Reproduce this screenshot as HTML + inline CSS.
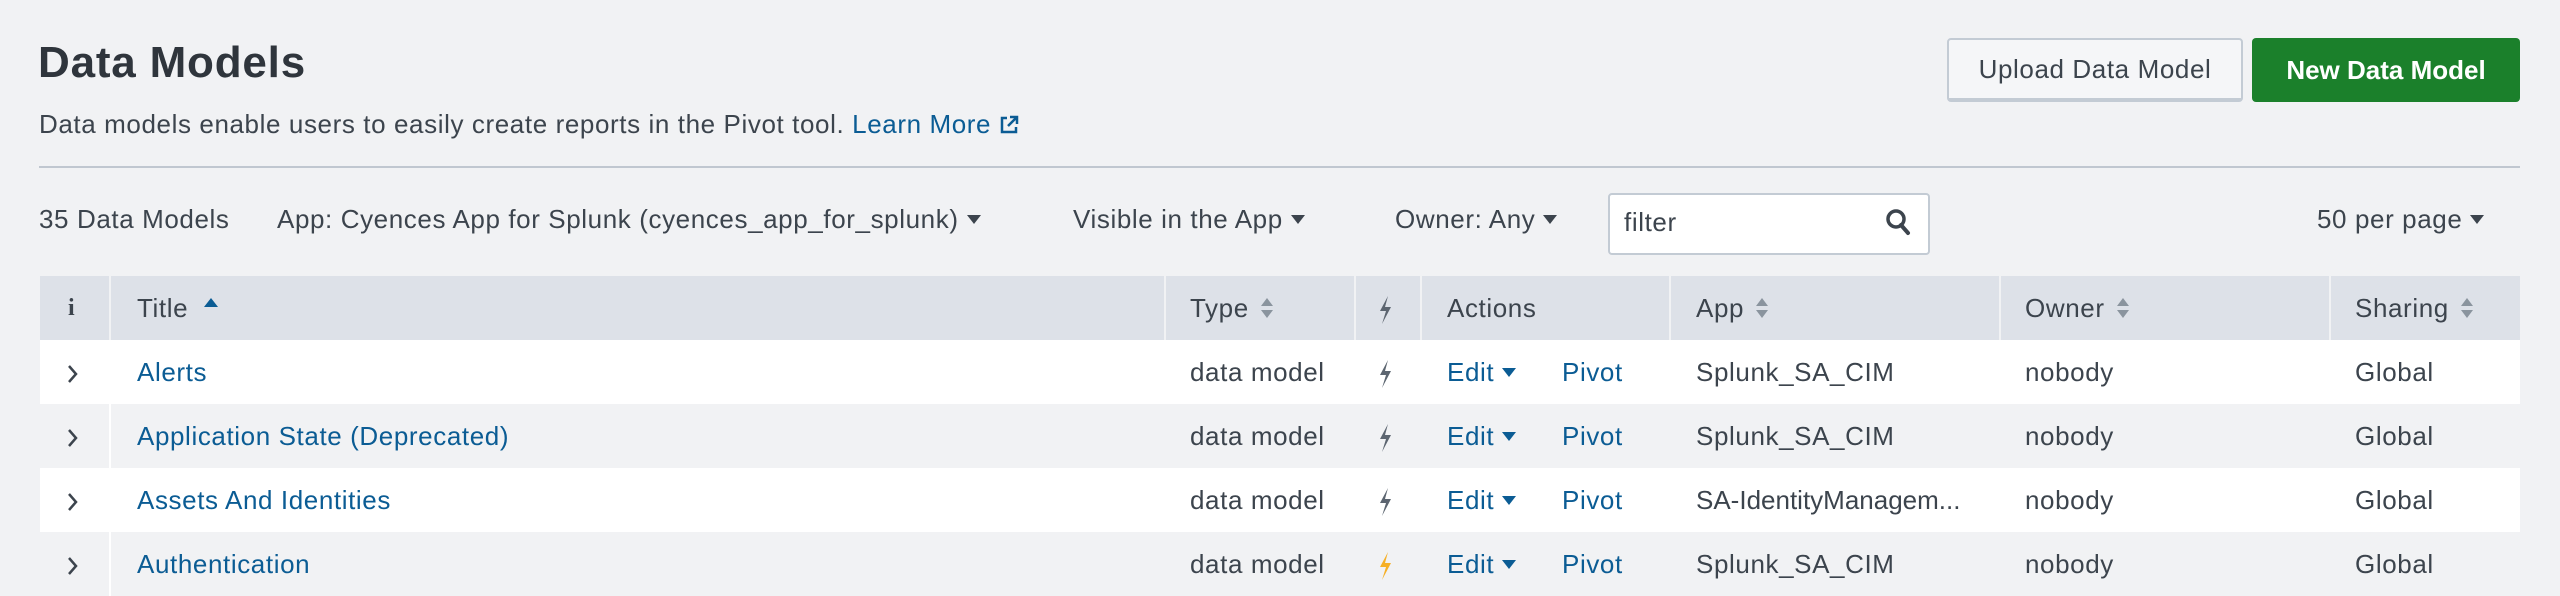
<!DOCTYPE html>
<html><head><meta charset="utf-8"><style>
*{margin:0;padding:0;box-sizing:border-box}
body{width:2560px;height:596px;background:#f1f2f4;font-family:"Liberation Sans",sans-serif;color:#3c444d;position:relative;overflow:hidden;letter-spacing:0.6px}
.a{position:absolute;white-space:nowrap}
.lnk{color:#0b5c94}
.btn{position:absolute;border-radius:4px;font-size:26px;display:flex;align-items:center;justify-content:center}
.tri{display:inline-block;width:0;height:0;border-left:7px solid transparent;border-right:7px solid transparent;border-top:9px solid currentColor;vertical-align:middle;margin-left:8px;position:relative;top:-2px}
.row{position:absolute;left:40px;width:2480px;height:64px}
.cell{position:absolute;top:0;height:64px;line-height:64px;font-size:26px;white-space:nowrap}
.sep{position:absolute;top:0;width:2px;height:64px;background:#f1f2f4}
.sort{display:inline-block;vertical-align:middle;margin-left:12px;position:relative;top:-2px}
</style></head><body>
<div class="a" style="left:38px;top:38px;font-size:44px;font-weight:bold;color:#2f353c;letter-spacing:0.8px">Data Models</div>
<div class="a" style="left:39px;top:109px;font-size:26px">Data models enable users to easily create reports in the Pivot tool. <span class="lnk">Learn More <svg width="20" height="20" viewBox="0 0 20 20" style="vertical-align:-2px"><path d="M8 3H3v14h14v-5" fill="none" stroke="#0b5c94" stroke-width="2.5"/><path d="M11 2h7v7M18 2l-9 9" fill="none" stroke="#0b5c94" stroke-width="2.5"/></svg></span></div>
<div class="btn" style="left:1947px;top:38px;width:296px;height:64px;background:#f5f6f8;border:2px solid #c3cbd4;border-bottom-width:4px;color:#3c444d">Upload Data Model</div>
<div class="btn" style="left:2252px;top:38px;width:268px;height:64px;background:#1b802b;color:#fff;font-weight:bold;letter-spacing:0">New Data Model</div>
<div class="a" style="left:39px;top:166px;width:2481px;height:2px;background:#c0c7d0"></div>
<div class="a" style="left:39px;top:204px;font-size:26px">35 Data Models</div>
<div class="a" style="left:277px;top:204px;font-size:26px">App: Cyences App for Splunk (cyences_app_for_splunk)<span class="tri"></span></div>
<div class="a" style="left:1073px;top:204px;font-size:26px">Visible in the App<span class="tri"></span></div>
<div class="a" style="left:1395px;top:204px;font-size:26px">Owner: Any<span class="tri"></span></div>
<div class="a" style="left:1608px;top:193px;width:322px;height:62px;background:#fff;border:2px solid #c3cbd4;border-radius:4px"></div>
<div class="a" style="left:1624px;top:207px;font-size:26px;color:#3c444d">filter</div>
<svg class="a" style="left:1885px;top:208px" width="26" height="28" viewBox="0 0 26 28"><circle cx="11" cy="11" r="8" fill="none" stroke="#3c444d" stroke-width="3.5"/><path d="M16 17l7 8" stroke="#3c444d" stroke-width="4" stroke-linecap="round"/></svg>
<div class="a" style="left:2317px;top:204px;font-size:26px">50 per page<span class="tri"></span></div>

<div class="row" style="top:276px;background:#dde1e8">
 <div class="cell" style="left:28px;font-family:'Liberation Serif',serif;font-weight:bold;font-size:24px">i</div>
 <div class="sep" style="left:69px"></div>
 <div class="cell" style="left:97px">Title <span style="display:inline-block;width:0;height:0;border-left:7px solid transparent;border-right:7px solid transparent;border-bottom:9px solid #0b5c94;vertical-align:middle;margin-left:8px;position:relative;top:-8px"></span></div>
 <div class="sep" style="left:1124px"></div>
 <div class="cell" style="left:1150px">Type<svg class="sort" width="12" height="20" viewBox="0 0 12 20"><path d="M6 0l6 8H0zM6 20l6-8H0z" fill="#8a949e"/></svg></div>
 <div class="sep" style="left:1314px"></div>
 <div class="cell" style="left:1337px"><svg width="16" height="28" viewBox="0 0 16 28" style="vertical-align:middle"><path d="M11 0L3 15h6L5 28l9-17H8z" fill="#5c6570"/></svg></div>
 <div class="sep" style="left:1380px"></div>
 <div class="cell" style="left:1407px">Actions</div>
 <div class="sep" style="left:1629px"></div>
 <div class="cell" style="left:1656px">App<svg class="sort" width="12" height="20" viewBox="0 0 12 20"><path d="M6 0l6 8H0zM6 20l6-8H0z" fill="#8a949e"/></svg></div>
 <div class="sep" style="left:1959px"></div>
 <div class="cell" style="left:1985px">Owner<svg class="sort" width="12" height="20" viewBox="0 0 12 20"><path d="M6 0l6 8H0zM6 20l6-8H0z" fill="#8a949e"/></svg></div>
 <div class="sep" style="left:2289px"></div>
 <div class="cell" style="left:2315px">Sharing<svg class="sort" width="12" height="20" viewBox="0 0 12 20"><path d="M6 0l6 8H0zM6 20l6-8H0z" fill="#8a949e"/></svg></div>
</div>

<div class="row" style="top:340px;background:#fff"><div class="cell" style="left:27px"><svg width="12" height="20" viewBox="0 0 12 20" style="vertical-align:middle"><path d="M2 2l7 8-7 8" fill="none" stroke="#3c444d" stroke-width="2.5"/></svg></div><div class="sep" style="left:69px;background:#fff"></div><div class="cell lnk" style="left:97px">Alerts</div><div class="cell" style="left:1150px">data model</div><div class="cell" style="left:1337px"><svg width="16" height="28" viewBox="0 0 16 28" style="vertical-align:middle"><path d="M11 0L3 15h6L5 28l9-17H8z" fill="#5c6570"/></svg></div><div class="cell lnk" style="left:1407px">Edit<span class="tri"></span></div><div class="cell lnk" style="left:1522px">Pivot</div><div class="cell" style="left:1656px">Splunk_SA_CIM</div><div class="cell" style="left:1985px">nobody</div><div class="cell" style="left:2315px">Global</div></div>

<div class="row" style="top:404px;background:#f1f2f4"><div class="cell" style="left:27px"><svg width="12" height="20" viewBox="0 0 12 20" style="vertical-align:middle"><path d="M2 2l7 8-7 8" fill="none" stroke="#3c444d" stroke-width="2.5"/></svg></div><div class="sep" style="left:69px;background:#fff"></div><div class="cell lnk" style="left:97px">Application State (Deprecated)</div><div class="cell" style="left:1150px">data model</div><div class="cell" style="left:1337px"><svg width="16" height="28" viewBox="0 0 16 28" style="vertical-align:middle"><path d="M11 0L3 15h6L5 28l9-17H8z" fill="#5c6570"/></svg></div><div class="cell lnk" style="left:1407px">Edit<span class="tri"></span></div><div class="cell lnk" style="left:1522px">Pivot</div><div class="cell" style="left:1656px">Splunk_SA_CIM</div><div class="cell" style="left:1985px">nobody</div><div class="cell" style="left:2315px">Global</div></div>

<div class="row" style="top:468px;background:#fff"><div class="cell" style="left:27px"><svg width="12" height="20" viewBox="0 0 12 20" style="vertical-align:middle"><path d="M2 2l7 8-7 8" fill="none" stroke="#3c444d" stroke-width="2.5"/></svg></div><div class="sep" style="left:69px;background:#fff"></div><div class="cell lnk" style="left:97px">Assets And Identities</div><div class="cell" style="left:1150px">data model</div><div class="cell" style="left:1337px"><svg width="16" height="28" viewBox="0 0 16 28" style="vertical-align:middle"><path d="M11 0L3 15h6L5 28l9-17H8z" fill="#5c6570"/></svg></div><div class="cell lnk" style="left:1407px">Edit<span class="tri"></span></div><div class="cell lnk" style="left:1522px">Pivot</div><div class="cell" style="left:1656px;letter-spacing:0">SA-IdentityManagem...</div><div class="cell" style="left:1985px">nobody</div><div class="cell" style="left:2315px">Global</div></div>

<div class="row" style="top:532px;background:#f1f2f4"><div class="cell" style="left:27px"><svg width="12" height="20" viewBox="0 0 12 20" style="vertical-align:middle"><path d="M2 2l7 8-7 8" fill="none" stroke="#3c444d" stroke-width="2.5"/></svg></div><div class="sep" style="left:69px;background:#fff"></div><div class="cell lnk" style="left:97px">Authentication</div><div class="cell" style="left:1150px">data model</div><div class="cell" style="left:1337px"><svg width="16" height="28" viewBox="0 0 16 28" style="vertical-align:middle"><path d="M11 0L3 15h6L5 28l9-17H8z" fill="#f6b026"/></svg></div><div class="cell lnk" style="left:1407px">Edit<span class="tri"></span></div><div class="cell lnk" style="left:1522px">Pivot</div><div class="cell" style="left:1656px">Splunk_SA_CIM</div><div class="cell" style="left:1985px">nobody</div><div class="cell" style="left:2315px">Global</div></div>
</body></html>
